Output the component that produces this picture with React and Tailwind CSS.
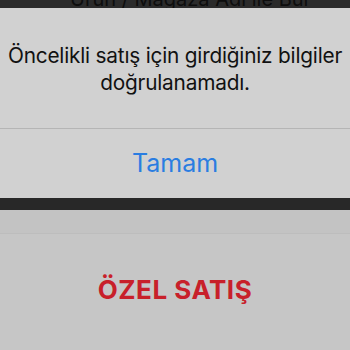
export default function App() {
  return (
    <div className="w-[350px] h-[350px] overflow-hidden bg-[#c6c6c6] flex flex-col" style={{ fontFamily: "Inter, 'Noto Sans', sans-serif" }}>
      {/* clipped header behind the alert */}
      <div className="h-[8px] bg-[#2b2b2b] overflow-hidden relative shrink-0">
        <div className="absolute left-[70px] -top-[16px] text-[20px] text-[#0d0d0d] whitespace-nowrap">Ürün / Mağaza Adı ile Bul</div>
      </div>

      {/* alert */}
      <div className="bg-[#d1d1d1] shrink-0">
        <div className="h-[120px] flex items-center justify-center pt-[2px]">
          <p className="text-center text-[20.8px] leading-[27px] tracking-[-0.2px] text-[#111] whitespace-nowrap">
            Öncelikli satış için girdiğiniz bilgiler
            <br />
            doğrulanamadı.
          </p>
        </div>
        <div className="h-[1px] bg-[#b5b5b5]" />
        <div className="h-[69px] flex items-center justify-center">
          <span className="text-[25px] text-[#2a7de1]">Tamam</span>
        </div>
      </div>

      <div className="h-[12px] bg-[#282828] shrink-0" />
      <div className="h-[24px] bg-[#c3c3c3] border-b border-[#bdbdbd] shrink-0" />

      <div className="flex-1 flex items-center justify-center pb-[6px]">
        <span className="text-[26px] font-bold tracking-[0.5px] text-[#c8202a]">ÖZEL SATIŞ</span>
      </div>
    </div>
  );
}
